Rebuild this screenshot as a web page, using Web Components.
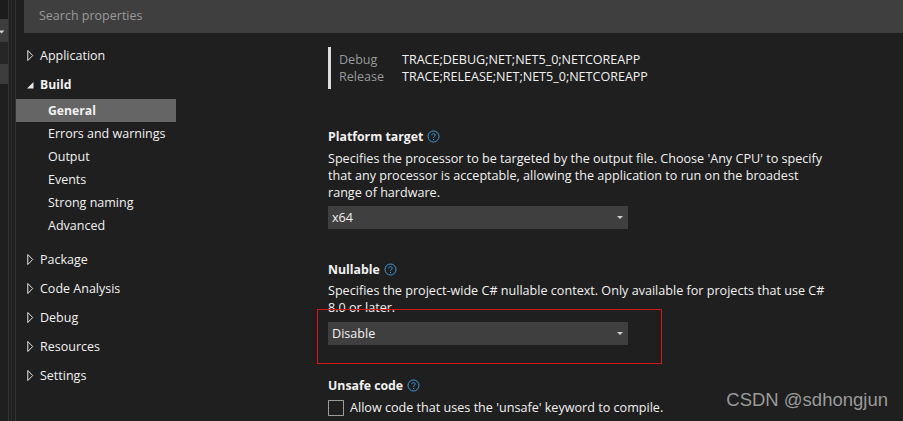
<!DOCTYPE html>
<html>
<head>
<meta charset="utf-8">
<style>
    html, body {
        margin: 0;
        width: 903px;
        height: 421px;
        overflow: hidden;
        background: #1f1f1f;
    }
</style>
</head>
<body>
<template id="nav-group-tpl">
    <style>
        :host {
            display: flex;
            align-items: center;
            height: 29px;
            padding-left: 11px;
            font-size: 12.5px;
            color: #f1f1f1;
        }
        :host([open]) {
            font-weight: bold;
            font-size: 12.200px;
        }
        svg {
            width: 7px;
            height: 11px;
            margin-right: 6px;
            flex: none;
        }
    </style>
    <svg viewBox="0 0 7 11"></svg>
    <slot></slot>
</template>
<template id="nav-item-tpl">
    <style>
        :host {
            display: block;
            height: 23px;
            line-height: 23px;
            padding-left: 32px;
            font-size: 12.500px;
            color: #f1f1f1;
        }
        :host([selected]) {
            background: #656565;
            font-weight: bold;
            font-size: 12.200px;
        }
    </style>
    <slot></slot>
</template>
<template id="help-title-tpl">
    <style>
        :host {
            display: flex;
            align-items: center;
            gap: 4px;
            font-size: 12.300px;
            font-weight: bold;
            color: #f1f1f1;
        }
        svg {
            width: 13px;
            height: 13px;
        }
    </style>
    <slot></slot>
    <svg viewBox="0 0 13 13" fill="none" stroke="#3f9bdc">
        <circle cx="6.5" cy="6.5" r="5.5"/>
        <path d="M4.8 5.2c0-1 .8-1.6 1.7-1.6s1.7.6 1.7 1.5c0 1.300-1.700 1.300-1.700 2.700"/>
        <path d="M6.5 9v1"/>
    </svg>
</template>
<template id="combo-box-tpl">
    <style>
        :host {
            display: flex;
            align-items: center;
            justify-content: space-between;
            width: 300px;
            height: 23px;
            box-sizing: border-box;
            padding: 0 5px 0 4px;
            background: #3f3f3f;
            font-size: 12.600px;
            color: #f1f1f1;
        }
        i {
            width: 0;
            height: 0;
            border: 3.500px solid transparent;
            border-top: 3px solid #d0d0d0;
            border-bottom: 0;
        }
    </style>
    <slot></slot>
    <i></i>
</template>
<template id="props-nav-tpl">
    <style>
        :host {
            display: block;
            width: 160px;
            flex: none;
            padding-top: 8px;
        }
        .sub {
            display: block;
            margin: 0 0 8px;
        }
    </style>
    <nav-group>Application</nav-group>
    <nav-group open>Build</nav-group>
    <div class="sub">
        <nav-item selected>General</nav-item>
        <nav-item>Errors and warnings</nav-item>
        <nav-item>Output</nav-item>
        <nav-item>Events</nav-item>
        <nav-item>Strong naming</nav-item>
        <nav-item>Advanced</nav-item>
    </div>
    <nav-group>Package</nav-group>
    <nav-group>Code Analysis</nav-group>
    <nav-group>Debug</nav-group>
    <nav-group>Resources</nav-group>
    <nav-group>Settings</nav-group>
</template>
<template id="props-page-tpl">
    <style>
        :host {
            display: block;
            flex: 1;
            padding: 14px 0 0 152px;
            font-size: 12.600px;
            line-height: 17px;
            color: #f1f1f1;
        }
        .symbols {
            display: grid;
            grid-template-columns: 63px auto;
            align-content: center;
            width: 500px;
            height: 42px;
            box-sizing: border-box;
            padding-left: 8px;
            border-left: 3px solid #dcdcdc;
            font-size: 12.550px;
        }
        .symbols span:nth-child(odd) {
            color: #999;
        }
        section {
            width: 505px;
        }
        p {
            margin: 5px 0 5px;
        }
        .platform { margin-top: 39px; }
        .nullable { margin-top: 32px; }
        .unsafe { margin-top: 32px; }
        .check {
            display: flex;
            align-items: center;
            gap: 6px;
            margin-top: 5px;
        }
        .check i {
            width: 14px;
            height: 14px;
            border: 1px solid #999;
        }
        .mark {
            position: absolute;
            left: 317px;
            top: 309px;
            width: 343px;
            height: 53px;
            border: 1px solid #d01818;
            pointer-events: none;
        }
        .nullable p { margin: 4px 0 6px; }
    </style>
    <div class="symbols">
        <span>Debug</span><span>TRACE;DEBUG;NET;NET5_0;NETCOREAPP</span>
        <span>Release</span><span>TRACE;RELEASE;NET;NET5_0;NETCOREAPP</span>
    </div>
    <section class="platform">
        <help-title>Platform target</help-title>
        <p>Specifies the processor to be targeted by the output file. Choose 'Any CPU' to specify that any processor is acceptable, allowing the application to run on the broadest range of hardware.</p>
        <combo-box>x64</combo-box>
    </section>
    <section class="nullable">
        <help-title>Nullable</help-title>
        <p>Specifies the project-wide C# nullable context. Only available for projects that use C# 8.0 or later.</p>
        <combo-box>Disable</combo-box>
    </section>
    <section class="unsafe">
        <help-title>Unsafe code</help-title>
        <label class="check"><i></i>Allow code that uses the 'unsafe' keyword to compile.</label>
    </section>
    <div class="mark"></div>
</template>
<template id="props-window-tpl">
    <style>
        :host {
            display: grid;
            grid-template-columns: 16px 1fr;
            width: 903px;
            height: 421px;
            overflow: hidden;
            font-family: "Open Sans", "Noto Sans", sans-serif;
            background: #1f1f1f;
        }
        .strip {
            display: flex;
        }
        .tabs {
            position: relative;
            width: 8px;
            border-right: 1px solid #333;
            background: linear-gradient(#1c1c1c 0 19px, #3d3d3d 19px 42px, #262626 42px 64px, #3d3d3d 64px 84px, #1f1f1f 84px);
        }
        .tabs i {
            position: absolute;
            left: 0;
            top: 29px;
            width: 0;
            height: 0;
            border-left: 3px solid #d0d0d0;
            border-top: 3px solid transparent;
            border-bottom: 3px solid transparent;
            transform: rotate(90deg);
        }
        .rails {
            flex: 1;
            border-right: 1px solid #333;
            background: linear-gradient(90deg, #1f1f1f 0 2px, #2c2c2c 2px 3px, #1f1f1f 3px);
        }
        .search {
            height: 33px;
            line-height: 31px;
            margin-left: 8px;
            padding-left: 15px;
            background: #3f3f3f;
            font-size: 12.500px;
            color: #999;
        }
        .body {
            display: flex;
        }
        .water {
            position: absolute;
            right: 15px;
            bottom: 10px;
            font: 18.500px "Liberation Sans", sans-serif;
            color: #9a9a9a;
        }
    </style>
    <div class="strip">
        <div class="tabs"><i></i></div>
        <div class="rails"></div>
    </div>
    <div>
        <div class="search">Search properties</div>
        <div class="body">
            <props-nav></props-nav>
            <props-page></props-page>
        </div>
    </div>
    <div class="water">CSDN @sdhongjun</div>
</template>
<props-window></props-window>
<script>
    const define = (name, tplId, init) => {
        customElements.define(name, class extends HTMLElement {
            constructor() {
                super();
                this.attachShadow({ mode: 'open' });
                this.shadowRoot.appendChild(document.getElementById(tplId).content.cloneNode(true));
                if (init) init(this);
            }
        });
    };
    define('nav-group', 'nav-group-tpl', el => {
        const svg = el.shadowRoot.querySelector('svg');
        svg.innerHTML = el.hasAttribute('open')
            ? '<path d="M6.500 3v6.500H0z" fill="#e8e8e8"/>'
            : '<path d="M.8.500l4.900 5-4.900 5z" fill="none" stroke="#e8e8e8"/>';
    });
    define('nav-item', 'nav-item-tpl');
    define('help-title', 'help-title-tpl');
    define('combo-box', 'combo-box-tpl');
    define('props-nav', 'props-nav-tpl');
    define('props-page', 'props-page-tpl');
    define('props-window', 'props-window-tpl');
</script>
</body>
</html>
